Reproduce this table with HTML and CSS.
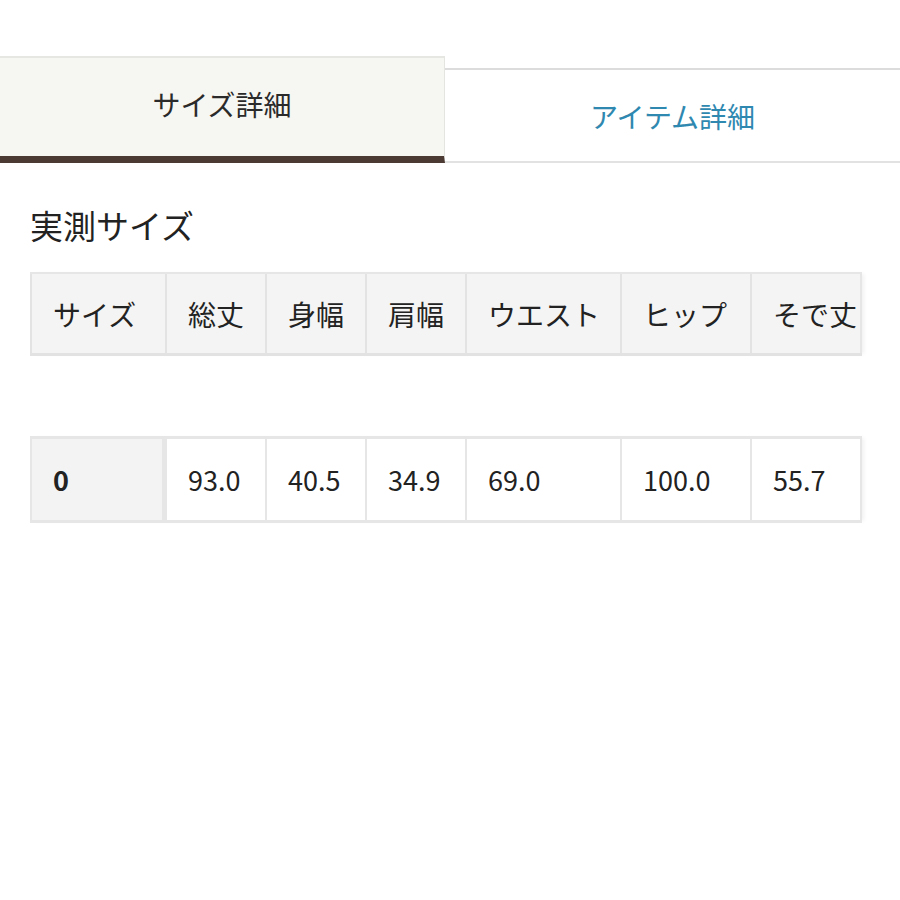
FILE: index.html
```html
<!DOCTYPE html>
<html lang="ja">
<head>
<meta charset="utf-8">
<link rel="stylesheet" href="styles.css">
</head>
<body>
<div class="page">
  <div class="tabs">
    <div class="tab tab-active">サイズ詳細</div>
    <div class="tab tab-inactive">アイテム詳細</div>
  </div>
  <h2 class="heading">実測サイズ</h2>
  <div class="row row-head">
    <div class="cell c1">サイズ</div>
    <div class="cell c2">総丈</div>
    <div class="cell c3">身幅</div>
    <div class="cell c4">肩幅</div>
    <div class="cell c5">ウエスト</div>
    <div class="cell c6">ヒップ</div>
    <div class="cell c7">そで丈</div>
  </div>
  <div class="row row-data">
    <div class="cell c1 first">0</div>
    <div class="cell c2">93.0</div>
    <div class="cell c3">40.5</div>
    <div class="cell c4">34.9</div>
    <div class="cell c5">69.0</div>
    <div class="cell c6">100.0</div>
    <div class="cell c7">55.7</div>
  </div>
</div>
</body>
</html>
```
FILE: styles.css
```css
html, body {
  margin: 0;
  padding: 0;
  background: #ffffff;
}
body {
  font-family: "Noto Sans CJK JP", "Noto Sans", sans-serif;
  color: #222;
  width: 900px;
  height: 900px;
  overflow: hidden;
}
.page {
  padding-top: 56px;
}
.tabs {
  display: flex;
  align-items: flex-start;
  height: 107px;
}
.tab {
  display: flex;
  align-items: center;
  justify-content: center;
  font-size: 28px;
  box-sizing: border-box;
}
.tab-active {
  width: 445px;
  height: 107px;
  background: #f6f6f2;
  border-top: 2px solid #e6e6e2;
  border-right: 1px solid #e4e4e0;
  border-bottom: 7px solid #4b3a33;
  color: #2a2a2a;
  padding-bottom: 6px;
}
.tab-inactive {
  flex: 1;
  margin-top: 12px;
  height: 95px;
  background: #fff;
  border-top: 2px solid #dcdcdc;
  border-bottom: 2px solid #e2e2e2;
  color: #2f88b0;
}
.heading {
  margin: 37px 0 0 30px;
  font-size: 33px;
  font-weight: 400;
  line-height: 50px;
  color: #222;
}
.row {
  display: grid;
  grid-template-columns: 135px 100px 100px 100px 155px 130px 112px;
  margin-left: 30px;
  width: 832px;
  box-sizing: border-box;
  box-shadow: 4px 0 4px -2px rgba(0,0,0,0.06);
}
.row-head {
  margin-top: 22px;
  height: 84px;
  border-top: 2px solid #e6e6e6;
  border-bottom: 3px solid #e2e2e2;
}
.row-head .cell {
  background: #f4f4f4;
  font-size: 28px;
  border-left: 2px solid #e3e3e3;
}
.row-data {
  margin-top: 80px;
  height: 87px;
  border-top: 3px solid #e6e6e6;
  border-bottom: 3px solid #e6e6e6;
}
.row-data .cell {
  background: #fff;
  font-size: 27px;
  border-left: 2px solid #e6e6e6;
}
.row-data .cell.first {
  background: #f3f3f3;
  font-weight: 700;
  border-right: 3px solid #e6e6e6;
}
.cell {
  display: flex;
  align-items: center;
  padding-left: 21px;
  box-sizing: border-box;
  white-space: nowrap;
  overflow: hidden;
  color: #222;
}
.row .c7 {
  border-right: 2px solid #e6e6e6;
}
```
